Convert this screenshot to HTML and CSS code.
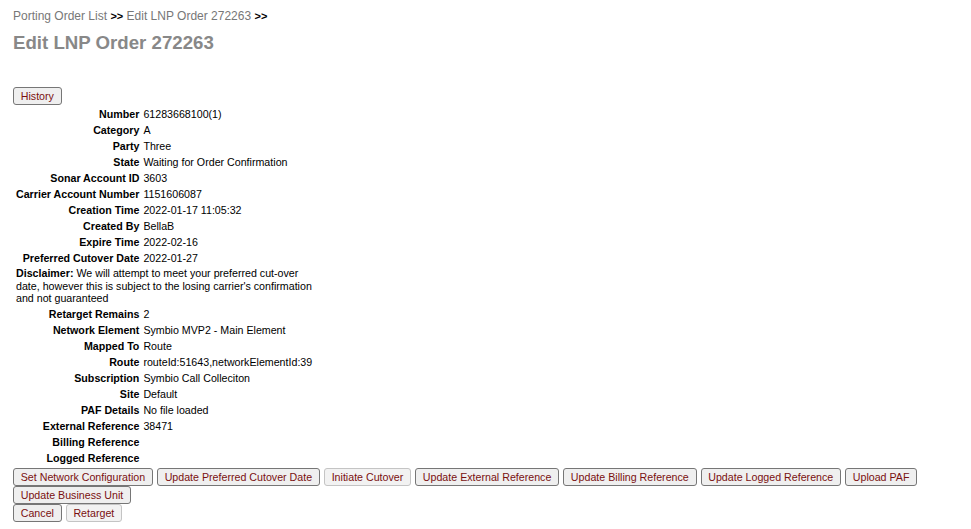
FILE: index.html
```html
<!DOCTYPE html>
<html>
<head>
<meta charset="utf-8">
<title>Edit LNP Order 272263</title>
<link rel="stylesheet" href="styles.css">
</head>
<body>
<div class="page">
  <div class="crumbs"><a class="crumb">Porting Order List</a> <b class="sep">&gt;&gt;</b> <a class="crumb">Edit LNP Order 272263</a> <b class="sep">&gt;&gt;</b></div>
  <h1 class="title">Edit LNP Order 272263</h1>
  <div class="history-row"><button class="btn">History</button></div>
  <table class="details">
    <tr><th>Number</th><td>61283668100(1)</td></tr>
    <tr><th>Category</th><td>A</td></tr>
    <tr><th>Party</th><td>Three</td></tr>
    <tr><th>State</th><td>Waiting for Order Confirmation</td></tr>
    <tr><th>Sonar Account ID</th><td>3603</td></tr>
    <tr><th>Carrier Account Number</th><td>1151606087</td></tr>
    <tr><th>Creation Time</th><td>2022-01-17 11:05:32</td></tr>
    <tr><th>Created By</th><td>BellaB</td></tr>
    <tr><th>Expire Time</th><td>2022-02-16</td></tr>
    <tr><th>Preferred Cutover Date</th><td>2022-01-27</td></tr>
    <tr><td colspan="2" class="disclaimer"><div class="disclaimer-text"><b>Disclaimer:</b> We will attempt to meet your preferred cut-over date, however this is subject to the losing carrier's confirmation and not guaranteed</div></td></tr>
    <tr><th>Retarget Remains</th><td>2</td></tr>
    <tr><th>Network Element</th><td>Symbio MVP2 - Main Element</td></tr>
    <tr><th>Mapped To</th><td>Route</td></tr>
    <tr><th>Route</th><td>routeId:51643,networkElementId:39</td></tr>
    <tr><th>Subscription</th><td>Symbio Call Colleciton</td></tr>
    <tr><th>Site</th><td>Default</td></tr>
    <tr><th>PAF Details</th><td>No file loaded</td></tr>
    <tr><th>External Reference</th><td>38471</td></tr>
    <tr><th>Billing Reference</th><td></td></tr>
    <tr><th>Logged Reference</th><td></td></tr>
  </table>
  <div class="actions first">
    <button class="btn">Set Network Configuration</button>
    <button class="btn">Update Preferred Cutover Date</button>
    <button class="btn disabled">Initiate Cutover</button>
    <button class="btn">Update External Reference</button>
    <button class="btn">Update Billing Reference</button>
    <button class="btn">Update Logged Reference</button>
    <button class="btn">Upload PAF</button>
    <button class="btn">Update Business Unit</button>
  </div>
  <div class="actions">
    <button class="btn">Cancel</button>
    <button class="btn disabled">Retarget</button>
  </div>
</div>
</body>
</html>
```
FILE: styles.css
```css
html, body {
  margin: 0;
  padding: 0;
  background: #fff;
}
.page {
  padding: 8px 13px;
  font-family: "Liberation Sans", Arial, sans-serif;
  color: #000;
}
.crumbs {
  font-size: 12px;
  line-height: 16px;
}
.crumb {
  color: #777;
  text-decoration: none;
}
.sep {
  color: #000;
  font-weight: bold;
  font-size: 11px;
}
.title {
  margin: 8px 0 0;
  font-size: 18.67px;
  line-height: 22px;
  font-weight: bold;
  color: #888;
}
.history-row {
  margin-top: 33px;
  height: 18px;
  margin-bottom: 1px;
  display: flex;
}
.btn {
  font-family: "Liberation Sans", Arial, sans-serif;
  font-size: 10.67px;
  height: 18px;
  line-height: 14px;
  padding: 0 6.75px;
  margin: 0;
  border: 1px solid #767676;
  border-radius: 3px;
  background: #efefef;
  color: #7a0f0f;
}
.btn.disabled {
  border-color: #c4c4c4;
  background: #f2f2f2;
}
.details {
  border-collapse: collapse;
  border-spacing: 0;
  font-size: 10.67px;
  line-height: 12px;
}
.details th {
  text-align: right;
  font-weight: bold;
  padding: 2px 2px 2px 3px;
  white-space: nowrap;
}
.details td {
  text-align: left;
  padding: 2px 2px;
  white-space: nowrap;
}
.details td.disclaimer {
  white-space: normal;
  padding: 1px 2px 1.5px 3px;
}
.disclaimer-text {
  width: 0;
  min-width: 100%;
  line-height: 12.5px;
}
.actions {
  display: flex;
  flex-wrap: wrap;
  column-gap: 4px;
  row-gap: 0;
  width: 945px;
}
.actions.first {
  margin-top: 2px;
}
```
